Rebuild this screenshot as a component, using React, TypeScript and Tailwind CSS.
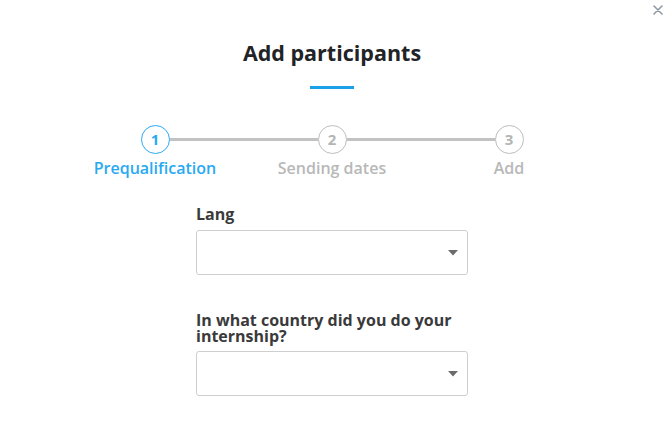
import React from "react";

const steps = [
    { n: 1, label: "Prequalification", active: true },
    { n: 2, label: "Sending dates", active: false },
    { n: 3, label: "Add", active: false },
];

const Caret = () => (
    <svg width="10" height="6" viewBox="0 0 10 6" className="text-[#6b6b6b]">
        <path d="M0 0 L10 0 L5 5.5 Z" fill="currentColor" />
    </svg>
);

const SelectBox: React.FC = () => (
    <div className="h-[45px] w-full rounded-[3px] border border-[#cfcfcf] bg-white flex items-center justify-end pr-[9px]">
        <Caret />
    </div>
);

const StepCircle: React.FC<{ n: number; active: boolean }> = ({ n, active }) => (
    <div
        className={
            active
                ? "w-[29px] h-[29px] shrink-0 rounded-full border-[1.5px] border-[#2aa9f3] text-[#2aa9f3] flex items-center justify-center text-[15px] font-bold"
                : "w-[29px] h-[29px] shrink-0 rounded-full border-[1.5px] border-[#bdbdbd] text-[#b5b5b5] flex items-center justify-center text-[15px] font-bold"
        }
    >
        {n}
    </div>
);

export default function App() {
    return (
        <div className="w-[664px] min-h-[423px] bg-white relative font-['Open_Sans',sans-serif]">
            {/* close */}
            <button className="absolute top-[5px] right-[1px] w-[10px] h-[10px] flex items-center justify-center">
                <svg width="10" height="10" viewBox="0 0 10 10" stroke="#8f9aa3" strokeWidth="1.6" strokeLinecap="round">
                    <path d="M1 1 L9 9 M9 1 L1 9" />
                </svg>
            </button>

            <h1 className="pt-[39px] text-center text-[21.5px] leading-[28px] font-bold text-[#222326]">
                Add participants
            </h1>
            <div className="mx-auto mt-[19px] w-[44px] h-[3px] bg-[#1ba1e8]" />

            {/* stepper */}
            <div className="mt-[36px] mx-auto w-[383px] flex items-center">
                <StepCircle n={1} active />
                <div className="flex-1 h-[3px] bg-[#c2c2c2]" />
                <StepCircle n={2} active={false} />
                <div className="flex-1 h-[3px] bg-[#c2c2c2]" />
                <StepCircle n={3} active={false} />
            </div>
            <div className="mt-[2px] mx-auto w-[531px] grid grid-cols-3 text-center">
                {steps.map(s => (
                    <span
                        key={s.n}
                        className={
                            s.active
                                ? "text-[16px] leading-[24px] font-semibold text-[#2aa9f3]"
                                : "text-[16px] leading-[24px] font-semibold text-[#b8b8b8]"
                        }
                    >
                        {s.label}
                    </span>
                ))}
            </div>

            {/* form */}
            <div className="mx-auto w-[272px] mt-[24px] pb-[27px]">
                <label className="block text-[16px] leading-[20px] font-bold text-[#3a3a3a] mb-[6px]">Lang</label>
                <SelectBox />
                <label className="block mt-[37px] mb-[7px] text-[16px] leading-[16px] font-bold text-[#3a3a3a]">
                    In what country did you do your internship?
                </label>
                <SelectBox />
            </div>
        </div>
    );
}
